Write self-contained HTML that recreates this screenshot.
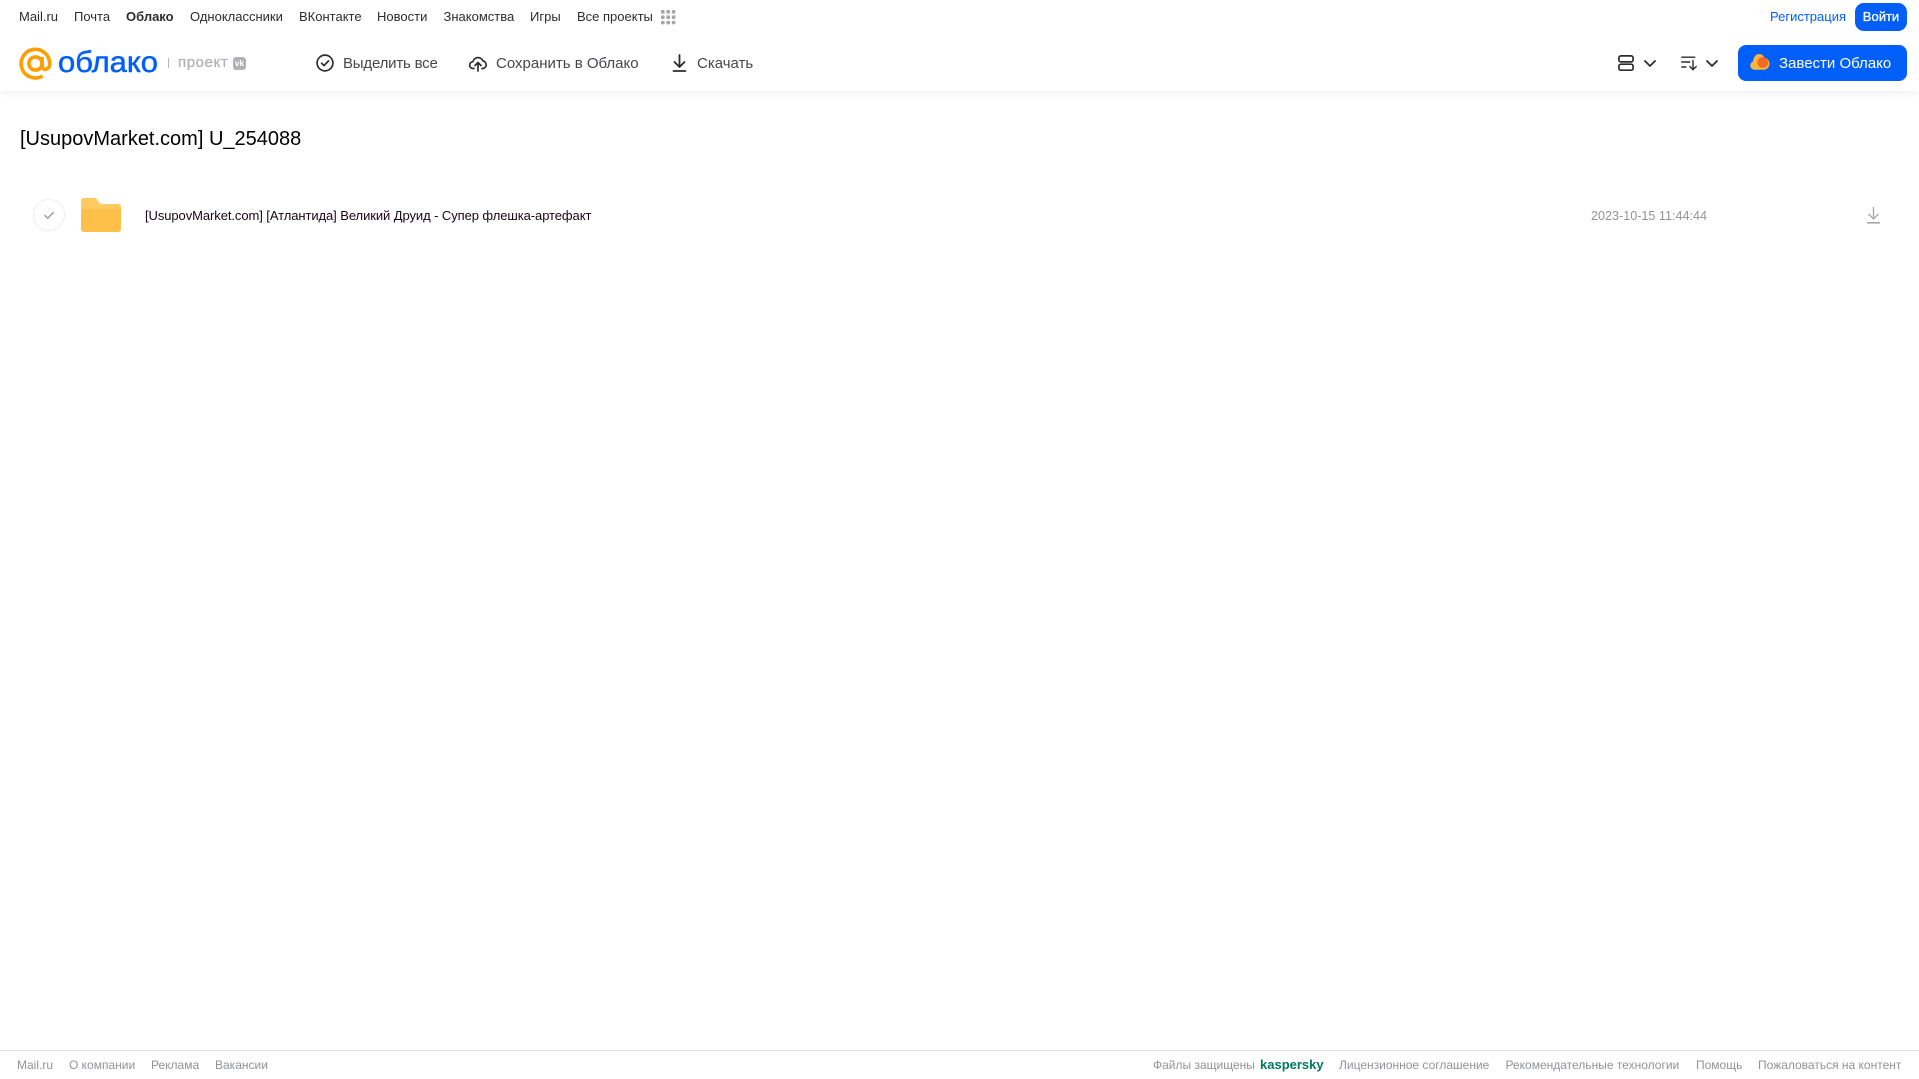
<!DOCTYPE html>
<html lang="ru"><head><meta charset="utf-8"><title>Облако</title>
<style>
html,body{margin:0;padding:0;background:#fff;width:1919px;height:1079px;overflow:hidden;font-family:"Liberation Sans",Arial,sans-serif}
.t{position:absolute;white-space:nowrap;line-height:20px;height:20px}
.n{top:7px;font-size:13px;color:#2c2d2e}
.b{top:53.5px;font-size:15px;color:#45474a}
.f{top:1055px;font-size:12px;color:#919399}
svg{position:absolute;overflow:visible}
</style></head><body>
<div style="position:absolute;left:0;top:0;width:1919px;height:91px;background:#fff;box-shadow:0 2px 8px rgba(0,0,0,.07)"></div>

<span class="t n" style="left:19px">Mail.ru</span>
<span class="t n" style="left:74px">Почта</span>
<span class="t n" style="left:126px;font-weight:bold">Облако</span>
<span class="t n" style="left:190px">Одноклассники</span>
<span class="t n" style="left:299px">ВКонтакте</span>
<span class="t n" style="left:377px">Новости</span>
<span class="t n" style="left:443.5px">Знакомства</span>
<span class="t n" style="left:530px">Игры</span>
<span class="t n" style="left:577px">Все проекты</span>
<svg style="left:661px;top:10px" width="15" height="15" fill="#a5a7ab"><rect x="0" y="0" width="3.6" height="3.6" rx="1"/><rect x="5.4" y="0" width="3.6" height="3.6" rx="1"/><rect x="10.8" y="0" width="3.6" height="3.6" rx="1"/><rect x="0" y="5.4" width="3.6" height="3.6" rx="1"/><rect x="5.4" y="5.4" width="3.6" height="3.6" rx="1"/><rect x="10.8" y="5.4" width="3.6" height="3.6" rx="1"/><rect x="0" y="10.8" width="3.6" height="3.6" rx="1"/><rect x="5.4" y="10.8" width="3.6" height="3.6" rx="1"/><rect x="10.8" y="10.8" width="3.6" height="3.6" rx="1"/></svg>

<!-- logo -->
<svg style="left:19px;top:47px" width="33" height="33" viewBox="0 0 33 33" fill="none" stroke="#ff9e00" stroke-width="3.6"><circle cx="16.5" cy="16.5" r="6.6"/><path d="M23.1 10v8.6c0 5.6 7.6 5 7.6-2.1A14.3 14.3 0 1 0 23.6 29"/></svg>
<svg style="left:56px;top:44px" width="108" height="38"><text x="2" y="28" font-family="Liberation Sans" font-size="30" fill="#005ff9" stroke="#005ff9" stroke-width=".5" textLength="100" lengthAdjust="spacingAndGlyphs">облако</text></svg>
<div style="position:absolute;left:168px;top:58px;width:1px;height:10px;background:#b5b7ba"></div>
<span class="t" style="left:178px;top:53px;font-size:15px;color:#b0b2b6;-webkit-text-stroke:.3px #b0b2b6;letter-spacing:.6px">проект</span>
<div style="position:absolute;left:233px;top:57px;width:13px;height:13px;border-radius:3px;background:#b0b2b6;color:#fff;font-size:8px;line-height:13px;text-align:center;font-weight:bold">vk</div>

<!-- toolbar -->
<svg style="left:316px;top:54px" width="18" height="18" fill="none" stroke="#2c2d2e" stroke-width="1.7"><circle cx="9" cy="9" r="7.9"/><path d="M5.6 9.2l2.4 2.4 4.5-4.7" stroke-linecap="round" stroke-linejoin="round"/></svg>
<span class="t b" style="left:343px;letter-spacing:-.2px">Выделить все</span>
<svg style="left:469px;top:54px" width="18" height="18" viewBox="0 0 18 18" fill="none" stroke="#2c2d2e" stroke-width="1.7" stroke-linecap="round" stroke-linejoin="round"><path d="M5 14.5H4.2A3.4 3.4 0 0 1 3.9 7.7 5.3 5.3 0 0 1 14 7a3.8 3.8 0 0 1 0 7.5h-1"/><path d="M9 17V9M6 11.5L9 8.5l3 3"/></svg>
<span class="t b" style="left:496px">Сохранить в Облако</span>
<svg style="left:672px;top:54px" width="15" height="18" fill="none" stroke="#2c2d2e" stroke-width="1.8" stroke-linecap="round" stroke-linejoin="round"><path d="M7.5 1v11.5M2.5 8l5 5 5-5M1.5 17h12"/></svg>
<span class="t b" style="left:697px">Скачать</span>

<!-- right -->
<span class="t" style="left:1770px;top:7px;font-size:13px;color:#005ff9">Регистрация</span>
<div style="position:absolute;left:1855px;top:3px;width:52px;height:28px;border-radius:9px;background:#005ff9;color:#fff;font-size:13px;-webkit-text-stroke:.3px #fff;line-height:28px;text-align:center">Войти</div>
<svg style="left:1618px;top:55px" width="16" height="16" fill="none" stroke="#2c2d2e" stroke-width="1.7"><rect x=".9" y=".9" width="14.2" height="6" rx="2"/><rect x=".9" y="9.2" width="14.2" height="6" rx="2"/></svg>
<svg style="left:1644px;top:60px" width="12" height="7" fill="none" stroke="#2c2d2e" stroke-width="1.8" stroke-linecap="round" stroke-linejoin="round"><path d="M1 1l5 5 5-5"/></svg>
<svg style="left:1681px;top:56px" width="17" height="15" fill="none" stroke="#2c2d2e" stroke-width="1.4" stroke-linecap="round" stroke-linejoin="round"><path d="M.8 1.2h13M.8 6h8M.8 11h4M12 4.5v9M8.8 10.5l3.2 3.2 3.2-3.2"/></svg>
<svg style="left:1706px;top:60px" width="12" height="7" fill="none" stroke="#2c2d2e" stroke-width="1.8" stroke-linecap="round" stroke-linejoin="round"><path d="M1 1l5 5 5-5"/></svg>
<div style="position:absolute;left:1738px;top:45px;width:169px;height:36px;border-radius:8px;background:#005ff9"></div>
<svg style="left:1750px;top:54px" width="20" height="16"><path d="M4.5 15.800a4.3 4.3 0 0 1-1.500-8.300C3.200 3 6.200 0 9 0c2.800 0 4.800 2 5.400 3.800 3 .3 5.100 2.900 5.100 6 0 3.300-2.600 6-5.800 6z" fill="#ffb43c"/><circle cx="12.800" cy="8.500" r="5.400" fill="#f26b21"/></svg>
<span class="t" style="left:1779px;top:53.5px;font-size:15px;color:#fff">Завести Облако</span>

<!-- title -->
<span class="t" style="left:20px;top:125.8px;height:26px;line-height:26px;font-size:20px;color:#000">[UsupovMarket.com] U_254088</span>

<!-- row -->
<svg style="left:33px;top:199px" width="32" height="32" fill="none"><circle cx="16" cy="16" r="15.5" stroke="#eceded"/><path d="M12 16.5l2.8 2.8 5.400-5.800" stroke="#919399" stroke-width="1.3" stroke-linecap="round" stroke-linejoin="round"/></svg>
<svg style="left:81px;top:198px" width="40" height="34"><path d="M0 3a3 3 0 0 1 3-3h10c3 0 3.5 2.5 5 4.5 1 1 2 1.500 3 1.500h16a3 3 0 0 1 3 3v22a3 3 0 0 1-3 3H3a3 3 0 0 1-3-3z" fill="#ffc04a"/><path d="M0 3a3 3 0 0 1 3-3h10c3 0 3.500 2.500 5 4.500 1 1 2 1.500 3 1.500h16a3 3 0 0 1 3 3v2H0z" fill="#ffca60"/></svg>
<span class="t" style="left:145px;top:205.5px;font-size:13px;letter-spacing:-.08px;color:#1a0613">[UsupovMarket.com] [Атлантида] Великий Друид - Супер флешка-артефакт</span>
<span class="t" style="left:1591px;top:205.5px;font-size:12.6px;color:#919399">2023-10-15 11:44:44</span>
<svg style="left:1867px;top:207px" width="13" height="17" fill="none" stroke="#a5a7ab" stroke-width="1.3"><path d="M6.5 0v11.5M1.500 7l5 5 5-5"/><path d="M0 15.800h13" stroke-width="1.600"/></svg>

<!-- footer -->
<div style="position:absolute;left:0;top:1050px;width:1919px;height:1px;background:#dcdde0"></div>
<span class="t f" style="left:17px">Mail.ru</span>
<span class="t f" style="left:69px">О компании</span>
<span class="t f" style="left:151px">Реклама</span>
<span class="t f" style="left:215px">Вакансии</span>
<span class="t f" style="left:1153px">Файлы защищены</span>
<span class="t f" style="left:1260px;font-weight:bold;color:#00795e;font-size:13px">kaspersky</span>
<span class="t f" style="left:1339px">Лицензионное соглашение</span>
<span class="t f" style="left:1505.5px">Рекомендательные технологии</span>
<span class="t f" style="left:1696px">Помощь</span>
<span class="t f" style="left:1758px">Пожаловаться на контент</span>
</body></html>
